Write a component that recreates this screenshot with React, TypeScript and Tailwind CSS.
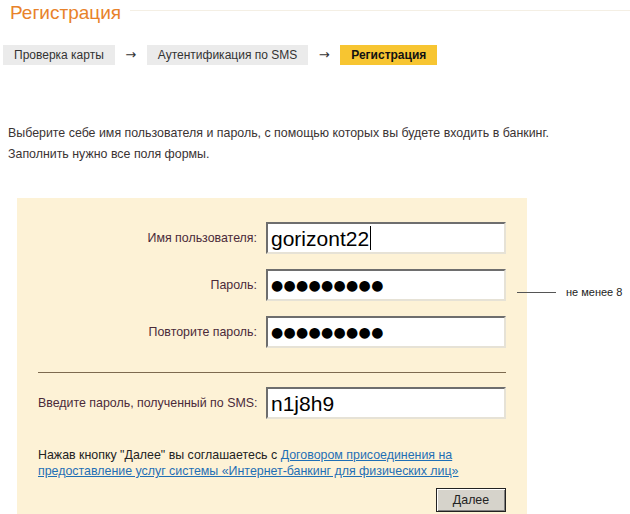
import React from "react";

const font = { fontFamily: '"Liberation Sans", Arial, sans-serif' };

function Step({ label, active }: { label: string; active?: boolean }) {
  return (
    <div
      className={
        active
          ? "h-[20px] px-[11px] flex items-center bg-[#f7c531] font-bold text-[#111]"
          : "h-[20px] px-[11px] flex items-center bg-[#ebebeb] text-[#333]"
      }
    >
      {label}
    </div>
  );
}

function Arrow() {
  return (
    <span className="w-[32px] text-center text-[13px] text-[#333]" style={{ fontFamily: '"DejaVu Sans", sans-serif' }}>
      →
    </span>
  );
}

function Field({ value, dots, caret }: { value: string; dots?: boolean; caret?: boolean }) {
  return (
    <div className="w-[240px] h-[32px] bg-white border-2 border-t-[#6e6e6e] border-l-[#6e6e6e] border-r-[#e6e2d6] border-b-[#e6e2d6] flex items-center pl-[3px] overflow-hidden">
      {dots ? (
        <span className="text-[14px] leading-none tracking-[0.3px] text-black" style={{ fontFamily: '"DejaVu Sans", sans-serif' }}>
          {value}
        </span>
      ) : (
        <span className="text-[21px] leading-none text-black flex items-center">
          {value}
          {caret && <span className="inline-block w-[1px] h-[24px] bg-black ml-[1px]" />}
        </span>
      )}
    </div>
  );
}

function Row({ label, children }: { label: string; children: React.ReactNode }) {
  return (
    <div className="flex items-center">
      <div className="w-[228px] pr-[9px] text-right text-[#4a2a3a] whitespace-nowrap">{label}</div>
      {children}
    </div>
  );
}

export default function App() {
  return (
    <div className="w-[630px] h-[514px] bg-white overflow-hidden text-[12.4px] text-[#333]" style={font}>
      <div className="flex items-center pl-[10px] pt-[1px]">
        <h1 className="text-[19px] leading-[24px] text-[#e8822a]">Регистрация</h1>
        <div className="flex-1 ml-[9px] h-px bg-[#f4efe4] -mt-[6px]" />
      </div>

      <div className="flex items-center mt-[20px] pl-[3px] text-[12px]">
        <Step label="Проверка карты" />
        <Arrow />
        <Step label="Аутентификация по SMS" />
        <Arrow />
        <Step label="Регистрация" active />
      </div>

      <p className="mt-[58px] pl-[8px] leading-[21px] text-[#3a3333]">
        Выберите себе имя пользователя и пароль, с помощью которых вы будете входить в банкинг.
        <br />
        Заполнить нужно все поля формы.
      </p>

      <div className="mt-[33px] ml-[17px] w-[510px] bg-[#fdf2d6] pt-[24px] pl-[21px] pr-[21px] pb-[20px]">
        <div className="flex flex-col gap-[15px]">
          <Row label="Имя пользователя:">
            <Field value="gorizont22" caret />
          </Row>
          <div className="relative">
            <Row label="Пароль:">
              <Field value="●●●●●●●●●" dots />
            </Row>
            <div className="absolute left-[479px] top-[15px] flex items-center whitespace-nowrap">
              <div className="w-[39px] h-px bg-[#555]" />
              <span className="ml-[10px] text-[11px] text-[#222]">не менее 8</span>
            </div>
          </div>
          <Row label="Повторите пароль:">
            <Field value="●●●●●●●●●" dots />
          </Row>
        </div>

        <div className="mt-[24px] h-px bg-[#7d6a4f]" />

        <div className="mt-[14px]">
          <Row label="Введите пароль, полученный по SMS:">
            <Field value="n1j8h9" />
          </Row>
        </div>

        <p className="mt-[28px] leading-[16px] text-[#222]">
          Нажав кнопку "Далее" вы соглашаетесь с{" "}
          <a href="#" className="text-[#1f6fb5] underline">
            Договором присоединения на
            <br />
            предоставление услуг системы «Интернет-банкинг для физических лиц»
          </a>
        </p>

        <div className="flex justify-end mt-[9px]">
          <button className="w-[70px] h-[24px] bg-[#d6d3cb] border border-[#222] shadow-[inset_1px_1px_0_#ffffff,inset_-1px_-1px_0_#808080] text-[#222] text-[12.4px]">
            Далее
          </button>
        </div>
      </div>
    </div>
  );
}
